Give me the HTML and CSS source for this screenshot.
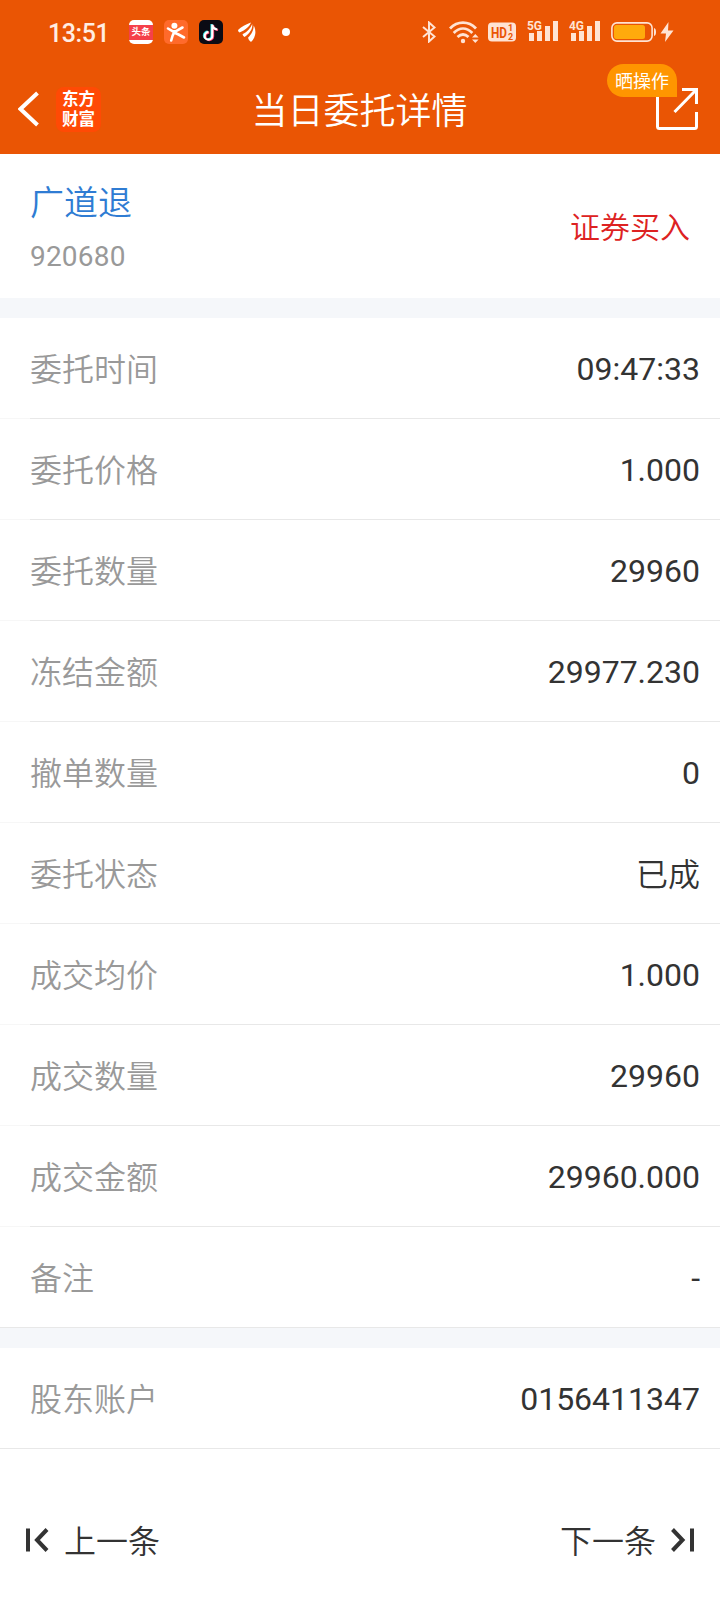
FILE: index.html
```html
<!DOCTYPE html>
<html lang="zh-CN">
<head>
    <meta charset="UTF-8">
    <meta name="viewport" content="width=device-width, initial-scale=1.0">
    <title>当日委托详情</title>
    <link rel="stylesheet" href="styles.css">
</head>
<body>
    <header class="header">
        <div class="status-bar">
            <span class="clock">13:51</span>
            <div class="app-icons">
                <span class="app toutiao"><b>头条</b></span>
                <svg class="app" viewBox="0 0 24 24">
                    <rect width="24" height="24" rx="5" fill="#ff6a2b"/>
                    <circle cx="10.400" cy="5.800" r="3" fill="#fff"/>
                    <path d="M4 8.500L8.500 11.200H12L18.500 7.500M10 12.500L14.500 14.500L20 17.500M10 12.500L8.500 16L7.200 20.500" fill="none" stroke="#fff" stroke-width="2.600" stroke-linecap="round" stroke-linejoin="round"/>
                </svg>
                <svg class="app" viewBox="0 0 24 24">
                    <rect width="24" height="24" rx="5" fill="#0b0b14"/>
                    <g fill="none" stroke-width="2.2">
                        <path d="M12.500 4v11.400a3.800 3.800 0 1 1-3.800-3.800M12.500 4.400c.4 2.700 2.300 4.300 5 4.600" stroke="#25d9e0"/>
                        <path d="M14.100 5v11.400a3.800 3.800 0 1 1-3.800-3.800M14.100 5.400c.4 2.700 2.300 4.300 5 4.600" stroke="#f8305c"/>
                        <path d="M13.300 4.500v11.400a3.800 3.800 0 1 1-3.800-3.800M13.300 4.900c.4 2.700 2.300 4.300 5 4.600" stroke="#fff"/>
                    </g>
                </svg>
                <svg class="wing" viewBox="0 0 18 20">
                    <path d="M0 8C3 5 8 2 13 .5C11.500 4.500 7.500 8 1.500 10.500Q0 9.500 0 8Z" fill="#fff"/>
                    <path d="M4.500 12.300C9.500 9.500 12.500 6.500 14.200 2C15 7 11.500 11.500 6.500 15Q4.800 14 4.500 12.300Z" fill="#fff"/>
                    <path d="M10 15.800C13.500 12 15.500 9 15.700 3.500C18.800 9 17.500 16 13 20Q10.500 18.500 10 15.800Z" fill="#fff"/>
                </svg>
                <span class="dot"></span>
            </div>
            <div class="sys-icons">
                <svg class="bluetooth" viewBox="0 0 14 22">
                    <path d="M1 6L12.500 15.500L7 20.500V1.500L12.500 6.500L1 16" fill="none" stroke="#ffe3d3" stroke-width="2"/>
                </svg>
                <svg class="wifi" viewBox="0 0 30 23">
                    <g fill="none" stroke="#ffe3d3" stroke-width="2.800">
                        <path d="M1 7.500C8.500 -.3 19.500 -.3 27 7.500"/>
                        <path d="M4.700 12C10.500 6.200 17.500 6.200 23.300 12"/>
                        <path d="M8.500 16C12 12.700 16 12.700 19.500 16"/>
                    </g>
                    <circle cx="14" cy="20" r="2.200" fill="#ffe3d3"/>
                    <path d="M23 16.500L26.300 13L29.600 16.500ZM23 18.500L26.300 22L29.600 18.500Z" fill="#ffe3d3"/>
                </svg>
                <svg class="hd" viewBox="0 0 28 20">
                    <rect width="28" height="19" y=".5" rx="4" fill="#ffe3d3"/>
                    <g fill="#ea5504" font-family="Roboto, sans-serif" font-weight="700">
                        <text x="3" y="15.500" font-size="15" textLength="16" lengthAdjust="spacingAndGlyphs">HD</text>
                        <text x="20" y="9" font-size="9">1</text>
                        <text x="20" y="18" font-size="9">2</text>
                    </g>
                </svg>
                <svg class="signal" viewBox="0 0 32 24">
                    <text x="0" y="11.500" class="net" textLength="15" lengthAdjust="spacingAndGlyphs">5G</text>
                    <path d="M2 15h5v8h-5zM10 13h5v10h-5zM18 8h5v15h-5zM26 3h5v20h-5z" fill="#ffe3d3"/>
                </svg>
                <svg class="signal" viewBox="0 0 32 24">
                    <text x="0" y="11.500" class="net" textLength="15" lengthAdjust="spacingAndGlyphs">4G</text>
                    <path d="M2 15h5v8h-5zM10 13h5v10h-5zM18 8h5v15h-5zM26 3h5v20h-5z" fill="#ffe3d3"/>
                </svg>
                <svg class="battery" viewBox="0 0 63 21">
                    <rect x=".9" y=".9" width="40.200" height="18.200" rx="5" fill="none" stroke="#ffe3d3" stroke-width="1.600"/>
                    <rect x="3" y="3" width="31" height="14" rx="2.500" fill="#ffaa0c"/>
                    <path d="M43 6q2 .5 2 4t-2 4z" fill="#ffe3d3"/>
                    <path d="M57.500 0L49.500 11.500H55L54 20L62.500 8.500H57Z" fill="#ffe3d3"/>
                </svg>
            </div>
        </div>
        <nav class="nav-bar">
            <svg class="back" viewBox="0 0 22 36">
                <path d="M19.500 2L2.500 18L19.500 34" fill="none" stroke="#fff" stroke-width="4"/>
            </svg>
            <div class="logo">东方<br>财富</div>
            <h1 class="title">当日委托详情</h1>
            <div class="share">
                <svg viewBox="0 0 42 42">
                    <path d="M1.500 0V38.500Q1.500 40.500 3.500 40.500H38.500Q40.500 40.500 40.500 38.500V24" fill="none" stroke="#fff" stroke-width="3"/>
                    <path d="M26 1.500H40.500V16M40 2L18.500 24" fill="none" stroke="#fff" stroke-width="3"/>
                </svg>
                <span class="badge">晒操作</span>
            </div>
        </nav>
    </header>

    <section class="stock">
        <div>
            <div class="stock-name">广道退</div>
            <div class="stock-code">920680</div>
        </div>
        <div class="side">证券买入</div>
    </section>

    <ul class="list">
        <li><span>委托时间</span><em>09:47:33</em></li>
        <li><span>委托价格</span><em>1.000</em></li>
        <li><span>委托数量</span><em>29960</em></li>
        <li><span>冻结金额</span><em>29977.230</em></li>
        <li><span>撤单数量</span><em>0</em></li>
        <li><span>委托状态</span><em class="state">已成</em></li>
        <li><span>成交均价</span><em>1.000</em></li>
        <li><span>成交数量</span><em>29960</em></li>
        <li><span>成交金额</span><em>29960.000</em></li>
        <li class="last"><span>备注</span><em>-</em></li>
    </ul>
    <ul class="list">
        <li class="last"><span>股东账户</span><em>0156411347</em></li>
    </ul>

    <footer class="pager">
        <a class="page-link prev">
            <svg viewBox="0 0 24 24">
                <path d="M2 .5V23.500M21 1.500L11 12L21 22.500" fill="none" stroke="#333" stroke-width="4"/>
            </svg>
            <span>上一条</span>
        </a>
        <a class="page-link">
            <span>下一条</span>
            <svg viewBox="0 0 24 24">
                <path d="M22 .5V23.500M2.500 1.500L12.500 12L2.500 22.500" fill="none" stroke="#333" stroke-width="4"/>
            </svg>
        </a>
    </footer>
</body>
</html>
```
FILE: styles.css
```css
* {
    box-sizing: border-box;
}

body {
    margin: 0;
    width: 720px;
    height: 1600px;
    display: flex;
    flex-direction: column;
    background-color: #fff;
    color: #333;
    font-family: Roboto, "Noto Sans CJK SC", sans-serif;
    font-size: 32px;
}

svg {
    display: block;
    flex: none;
}

.header {
    height: 154px;
    background-color: #ea5504;
    color: #fff;
}

.status-bar {
    height: 64px;
    padding: 0 46px 0 48px;
    display: flex;
    align-items: center;
}

.clock {
    width: 81px;
    padding-top: 3px;
    font-size: 25px;
    font-weight: 500;
    letter-spacing: -0.4px;
    line-height: 61px;
    color: #ffede2;
}

.app-icons {
    display: flex;
    align-items: center;
    gap: 11px;
}

.app {
    width: 24px;
    height: 24px;
}

.toutiao {
    display: flex;
    align-items: center;
    border-radius: 5px;
    background: linear-gradient(#fff 5px, #f5404a 5px, #f5404a 20px, #fff 20px);
}

.toutiao b {
    width: 24px;
    font-size: 9.5px;
    line-height: 24px;
    text-align: center;
}

.wing {
    width: 18px;
    height: 20px;
    margin-left: 4px;
}

.dot {
    width: 8px;
    height: 8px;
    margin-left: 15px;
    border-radius: 50%;
    background-color: #fff;
}

.sys-icons {
    margin-left: auto;
    display: flex;
    align-items: center;
}

.bluetooth {
    width: 14px;
    height: 22px;
    margin-right: 13px;
}

.wifi {
    width: 30px;
    height: 23px;
    margin-right: 9px;
}

.hd {
    width: 28px;
    height: 20px;
    margin-right: 11px;
}

.signal {
    width: 32px;
    height: 24px;
    margin-right: 10px;
    margin-top: -4px;
}

.net {
    font-size: 13px;
    font-weight: 700;
    fill: #ffe3d3;
}

.battery {
    width: 63px;
    height: 21px;
}

.nav-bar {
    height: 90px;
    padding: 0 22px 0 18px;
    display: flex;
    align-items: center;
}

.back {
    width: 22px;
    height: 36px;
}

.logo {
    width: 45px;
    height: 45px;
    margin-left: 16px;
    padding-top: 3px;
    border-radius: 8px;
    background-color: #ff4a05;
    font-size: 16.5px;
    font-weight: 700;
    line-height: 20px;
    text-align: center;
}

.title {
    flex: 1;
    margin: 0;
    padding: 6px 38px 0 0;
    font-size: 36px;
    font-weight: 350;
    line-height: 84px;
    text-align: center;
}

.share {
    position: relative;
    width: 42px;
    height: 42px;
}

.badge {
    position: absolute;
    right: 21px;
    top: -24px;
    width: 70px;
    height: 33px;
    border-radius: 17px 17px 0 17px;
    background-color: #ff9500;
    font-size: 18px;
    line-height: 36px;
    text-align: center;
}

.stock {
    height: 144px;
    padding: 4px 30px 0;
    display: flex;
    align-items: center;
    justify-content: space-between;
}

.stock-name {
    color: #2f7cd3;
    font-size: 34px;
    font-weight: 350;
    line-height: 50px;
}

.stock-code {
    margin-top: 8px;
    color: #999;
    font-size: 28px;
    letter-spacing: 0.2px;
    line-height: 42px;
}

.side {
    padding-bottom: 6px;
    color: #dd2222;
    font-size: 30px;
    font-weight: 350;
}

.list {
    margin: 0;
    padding: 0;
    border-top: 20px solid #f5f7fa;
    list-style: none;
}

.list li {
    height: 101px;
    padding: 0 20px 0 30px;
    display: flex;
    align-items: center;
    justify-content: space-between;
    background: linear-gradient(90deg, #f7f7f7 30px, #e8e8e8 30px) bottom / 100% 1px no-repeat;
}

.list .last {
    background-image: linear-gradient(#e8e8e8, #e8e8e8);
}

.list span {
    padding-bottom: 4px;
    color: #999;
    font-weight: 350;
}

.list em {
    font-style: normal;
}

.list .state {
    padding-bottom: 4px;
    font-weight: 350;
}

.pager {
    flex: 1;
    padding: 30px 26px 0;
    display: flex;
    align-items: center;
    justify-content: space-between;
}

.page-link {
    display: flex;
    align-items: center;
    gap: 14px;
}

.page-link span {
    padding-bottom: 2px;
    font-weight: 350;
}

.page-link svg {
    width: 24px;
    height: 24px;
}
```
